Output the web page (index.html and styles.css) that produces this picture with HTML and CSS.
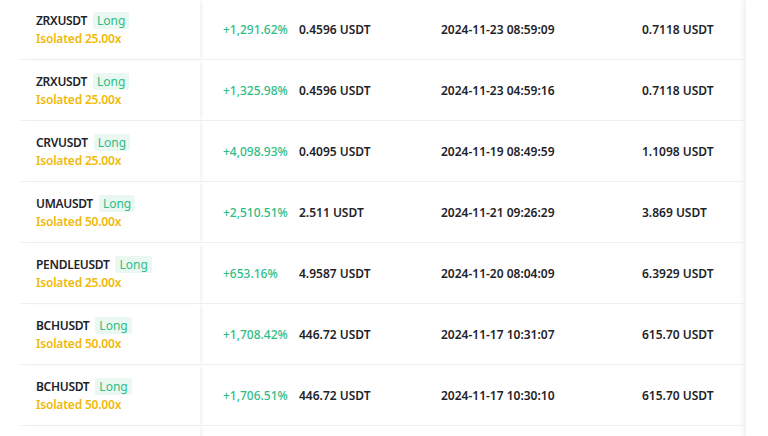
FILE: index.html
```html
<!DOCTYPE html>
<html>
<head>
<meta charset="utf-8">
<link rel="stylesheet" href="styles.css">
</head>
<body>
<div class="wrap">
  <div class="table">
    <div class="row">
      <div class="c sym"><div class="line1"><span class="name">ZRXUSDT</span><span class="badge">Long</span></div><div class="lev">Isolated 25.00x</div></div>
      <div class="c pnl">+1,291.62%</div>
      <div class="c entry">0.4596 USDT</div>
      <div class="c time">2024-11-23 08:59:09</div>
      <div class="c close">0.7118 USDT</div>
    </div>
    <div class="row">
      <div class="c sym"><div class="line1"><span class="name">ZRXUSDT</span><span class="badge">Long</span></div><div class="lev">Isolated 25.00x</div></div>
      <div class="c pnl">+1,325.98%</div>
      <div class="c entry">0.4596 USDT</div>
      <div class="c time">2024-11-23 04:59:16</div>
      <div class="c close">0.7118 USDT</div>
    </div>
    <div class="row">
      <div class="c sym"><div class="line1"><span class="name">CRVUSDT</span><span class="badge">Long</span></div><div class="lev">Isolated 25.00x</div></div>
      <div class="c pnl">+4,098.93%</div>
      <div class="c entry">0.4095 USDT</div>
      <div class="c time">2024-11-19 08:49:59</div>
      <div class="c close">1.1098 USDT</div>
    </div>
    <div class="row">
      <div class="c sym"><div class="line1"><span class="name">UMAUSDT</span><span class="badge">Long</span></div><div class="lev">Isolated 50.00x</div></div>
      <div class="c pnl">+2,510.51%</div>
      <div class="c entry">2.511 USDT</div>
      <div class="c time">2024-11-21 09:26:29</div>
      <div class="c close">3.869 USDT</div>
    </div>
    <div class="row">
      <div class="c sym"><div class="line1"><span class="name">PENDLEUSDT</span><span class="badge">Long</span></div><div class="lev">Isolated 25.00x</div></div>
      <div class="c pnl">+653.16%</div>
      <div class="c entry">4.9587 USDT</div>
      <div class="c time">2024-11-20 08:04:09</div>
      <div class="c close">6.3929 USDT</div>
    </div>
    <div class="row">
      <div class="c sym"><div class="line1"><span class="name">BCHUSDT</span><span class="badge">Long</span></div><div class="lev">Isolated 50.00x</div></div>
      <div class="c pnl">+1,708.42%</div>
      <div class="c entry">446.72 USDT</div>
      <div class="c time">2024-11-17 10:31:07</div>
      <div class="c close">615.70 USDT</div>
    </div>
    <div class="row">
      <div class="c sym"><div class="line1"><span class="name">BCHUSDT</span><span class="badge">Long</span></div><div class="lev">Isolated 50.00x</div></div>
      <div class="c pnl">+1,706.51%</div>
      <div class="c entry">446.72 USDT</div>
      <div class="c time">2024-11-17 10:30:10</div>
      <div class="c close">615.70 USDT</div>
    </div>
    <div class="row tail">
      <div class="c sym"></div>
      <div class="c"></div>
      <div class="c"></div>
      <div class="c"></div>
      <div class="c"></div>
    </div>
  </div>
  <div class="side"></div>
</div>
</body>
</html>
```

FILE: styles.css
```css
html, body {
  margin: 0;
  padding: 0;
  background: #fff;
  overflow: hidden;
}
body {
  font-family: "Noto Sans", "Liberation Sans", sans-serif;
  font-size: 12px;
  color: #1e2329;
}
.wrap {
  display: flex;
  margin-top: -1px;
  height: 440px;
  overflow: hidden;
}
.table {
  width: 726px;
  margin-left: 20px;
  flex: none;
  position: relative;
}
.row {
  display: grid;
  grid-template-columns: 180px 99px 142px 201px 104px;
  height: 60px;
  border-bottom: 1px solid #eff0f2;
}
.c {
  display: flex;
  align-items: center;
  font-weight: 600;
  white-space: nowrap;
}
.sym {
  flex-direction: column;
  align-items: flex-start;
  justify-content: center;
  padding-left: 16px;
  padding-top: 1px;
  box-shadow: 3px 0 4px -2px rgba(0,0,0,0.09);
  position: relative;
  z-index: 1;
  margin-bottom: -1px;
  border-bottom: 1px solid #eff0f2;
}
.line1 {
  display: flex;
  align-items: center;
  height: 18px;
}
.name {
  letter-spacing: -0.3px;
}
.badge {
  margin-left: 6px;
  padding: 0 4px;
  height: 17px;
  line-height: 17px;
  background: #ebf8f2;
  color: #2ebd85;
  font-weight: 400;
  border-radius: 2px;
}
.lev {
  height: 18px;
  line-height: 18px;
  color: #f0b90b;
  letter-spacing: -0.2px;
}
.pnl {
  padding-left: 23px;
  color: #2ebd85;
  font-weight: 500;
}
.side {
  flex: 1;
  background: #fff;
  box-shadow: -3px 0 5px rgba(0,0,0,0.06);
}
```
